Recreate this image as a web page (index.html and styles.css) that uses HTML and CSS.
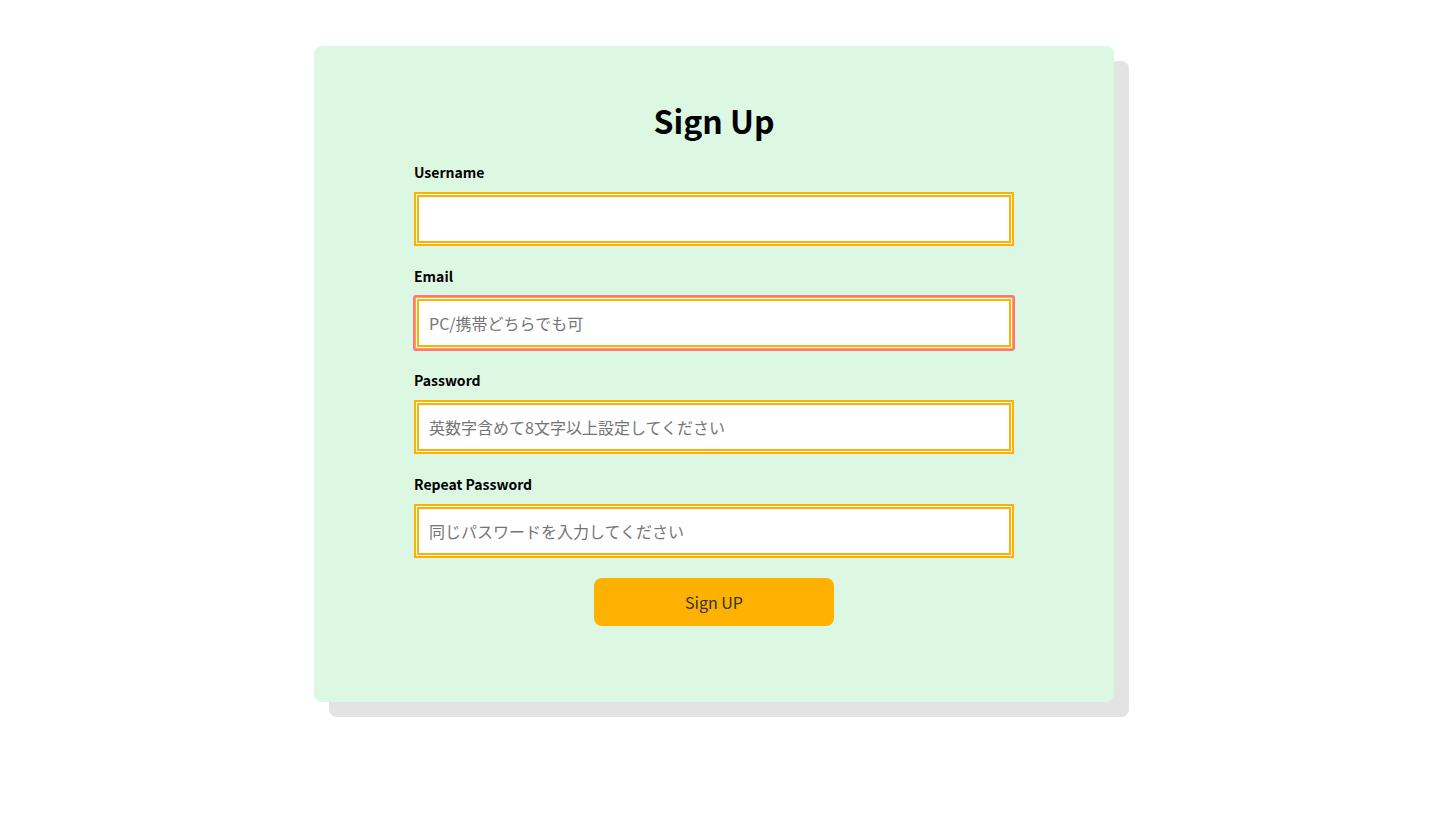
FILE: index.html
```html
<!DOCTYPE html>
<html lang="ja">
<head>
<meta charset="utf-8">
<title>Sign Up</title>
<link rel="stylesheet" href="styles.css">
</head>
<body>
<div class="page">
  <form class="card">
    <h1 class="title">Sign Up</h1>
    <div class="field">
      <label class="label" for="username">Username</label>
      <input class="input" id="username" type="text">
    </div>
    <div class="field">
      <label class="label" for="email">Email</label>
      <input class="input input-focus" id="email" type="email" placeholder="PC/携帯どちらでも可">
    </div>
    <div class="field">
      <label class="label" for="password">Password</label>
      <input class="input" id="password" type="password" placeholder="英数字含めて8文字以上設定してください">
    </div>
    <div class="field">
      <label class="label" for="repeat">Repeat Password</label>
      <input class="input" id="repeat" type="password" placeholder="同じパスワードを入力してください">
    </div>
    <div class="actions">
      <button class="button" type="button">Sign UP</button>
    </div>
  </form>
</div>
</body>
</html>
```
FILE: styles.css
```css
* { box-sizing: border-box; }
html, body { margin: 0; padding: 0; background: #fff; }
body {
  font-family: "Noto Sans CJK JP", "Noto Sans", sans-serif;
  color: #000;
}
.page {
  display: flex;
  justify-content: center;
  align-items: flex-start;
  min-height: 813px;
  padding: 46px 4px 60px 0;
}
.card {
  width: 800px;
  height: 656px;
  background: #dcf8e3;
  border-radius: 8px;
  box-shadow: 15px 15px 0 #e3e3e3;
  padding: 50px 100px 0;
  display: flex;
  flex-direction: column;
}
.title {
  margin: 0 0 18px;
  font-size: 32px;
  line-height: 48px;
  font-weight: 700;
  text-align: center;
}
.field {
  display: flex;
  flex-direction: column;
  margin-bottom: 20px;
}
.label {
  font-size: 14px;
  font-weight: 700;
  line-height: 20px;
  margin-bottom: 10px;
}
.input {
  width: 600px;
  height: 54px;
  border: 5px double #ffb000;
  background: #fff;
  padding: 0 10px;
  font-family: inherit;
  font-size: 16px;
  color: #333;
  outline: none;
}
.input::placeholder { color: #757575; }
.input-focus {
  outline: 2px solid #ff6f9f;
  outline-offset: -1px;
  border-radius: 2px;
}
.actions {
  display: flex;
  justify-content: center;
}
.button {
  width: 240px;
  height: 48px;
  border: none;
  border-radius: 8px;
  background: #ffb100;
  color: #333;
  font-family: inherit;
  font-size: 16px;
  cursor: pointer;
}
```
